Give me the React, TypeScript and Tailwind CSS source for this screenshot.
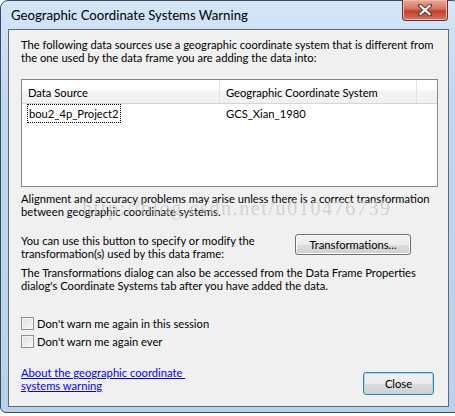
export default function App() {
  const btn =
    "rounded-[3px] border bg-[linear-gradient(#f2f2f2_0%,#ebebeb_50%,#dddddd_51%,#cfcfcf_100%)] text-black";

  return (
    <div className="w-[455px] h-[416px] overflow-hidden bg-white font-['Lato',sans-serif] text-[11.2px] text-black">
      <div className="relative w-[460px] h-[413px] rounded-t-[8px] rounded-b-[6px] border border-[#3e4a57] bg-[linear-gradient(#d4e6f8,#bfd8f0_25%,#b7d2ed)]">
        {/* title bar */}
        <div className="h-[28px] pl-[10px] pt-[5px] text-[13.2px] leading-[18px]">
          Geographic Coordinate Systems Warning
        </div>
        <div className="absolute left-[401px] top-[-1px] flex h-[21px] w-[46px] items-center justify-center rounded-b-[4px] border border-t-0 border-[#6e2b22] bg-[linear-gradient(#e9a99a_0%,#d7725f_45%,#c2402a_55%,#d9735e_100%)] shadow-[inset_0_0_0_1px_#f3b9ab]">
          <svg width="14" height="12" viewBox="0 0 14 12">
            <path d="M2 1.5 L12 10.5 M12 1.5 L2 10.5" stroke="#5a3a36" strokeWidth="4" strokeLinecap="square" />
            <path d="M2.5 2 L11.5 10 M11.5 2 L2.5 10" stroke="#ffffff" strokeWidth="2.2" strokeLinecap="square" />
          </svg>
        </div>

        {/* client area */}
        <div className="relative ml-[7px] h-[378px] w-[441px] whitespace-nowrap border border-[#5f6a75] bg-[#f0f0f0] pl-[12px] pt-[8px] leading-[13px]">
          <p>
            The following data sources use a geographic coordinate system that is different from
            <br />
            the one used by the data frame you are adding the data into:
          </p>

          <div className="mt-[15px] h-[108px] w-[417px] border border-[#828790] bg-white">
            <div className="flex h-[24px] border-b border-[#d5d5d5] bg-[linear-gradient(#ffffff_0%,#ffffff_45%,#f3f4f6_46%,#eef0f2_100%)]">
              <div className="w-[198px] border-r border-[#e2e4e7] pl-[6px] pt-[6px]">Data Source</div>
              <div className="w-[197px] border-r border-[#e2e4e7] pl-[6px] pt-[6px]">Geographic Coordinate System</div>
              <div className="flex-1" />
            </div>
            <div className="flex h-[19px]">
              <div className="w-[198px] pl-[5px]">
                <span className="inline-block h-[19px] border border-dotted border-black px-[1px] leading-[17px]">
                  bou2_4p_Project2
                </span>
              </div>
              <div className="pl-[6px] leading-[19px]">GCS_Xian_1980</div>
            </div>
          </div>

          <p className="mt-[5px]">
            Alignment and accuracy problems may arise unless there is a correct transformation
            <br />
            between geographic coordinate systems.
          </p>

          <div className="mt-[16px] flex items-start">
            <p className="w-[274px]">
              You can use this button to specify or modify the
              <br />
              transformation(s) used by this data frame:
            </p>
            <button className={`h-[21px] w-[116px] border-[#707070] shadow-[inset_0_0_0_1px_#fcfcfc] ${btn}`}>
              Transformations...
            </button>
          </div>

          <p className="mt-[6px]">
            The Transformations dialog can also be accessed from the Data Frame Properties
            <br />
            dialog's Coordinate Systems tab after you have added the data.
          </p>

          <div className="mt-[23px] flex flex-col gap-[1px]">
            {["Don't warn me again in this session", "Don't warn me again ever"].map((t) => (
              <label key={t} className="flex h-[17px] items-center gap-[3px]">
                <span className="h-[13px] w-[13px] border border-[#8e8f8f] bg-[linear-gradient(135deg,#dcdcdc,#f9f9f9)] shadow-[inset_0_0_0_1px_#f4f4f4]" />
                <span>{t}</span>
              </label>
            ))}
          </div>

          <div className="mt-[16px] flex items-start justify-between">
            <a href="#" className="text-[#0000ff] underline">
              About the geographic coordinate&nbsp;
              <br />
              systems warning
            </a>
            <button className={`mr-[14px] mt-[6px] h-[23px] w-[71px] border-[#3c7fb1] shadow-[inset_0_0_0_1px_#9fdcf6] ${btn}`}>
              Close
            </button>
          </div>

          {/* watermark */}
          <span className="pointer-events-none absolute left-[73px] top-[166px] font-['Liberation_Serif',serif] text-[20px] leading-[24px] tracking-[1.6px] text-[#c4c4c4]/70">
            http://blog.csdn.net/u010476739
          </span>
        </div>
      </div>
    </div>
  );
}
